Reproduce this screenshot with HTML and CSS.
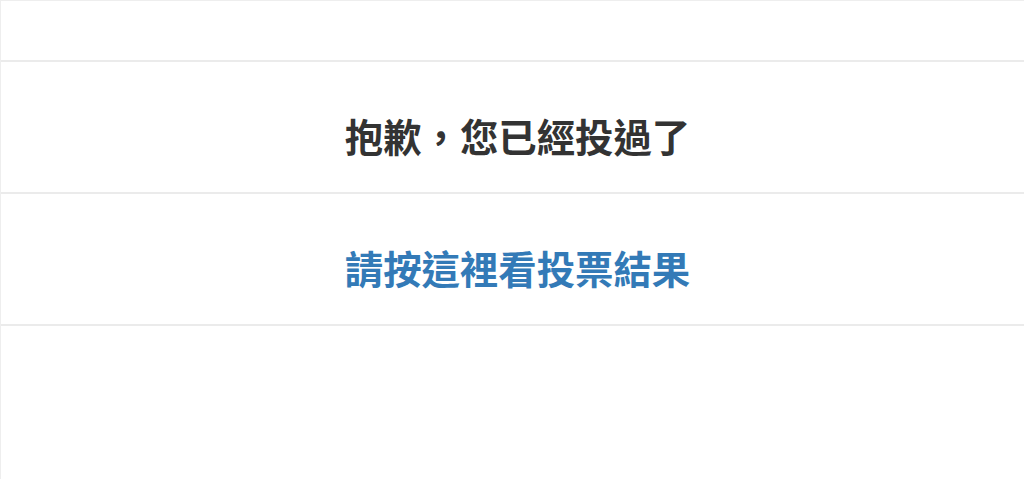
FILE: index.html
```html
<!DOCTYPE html>
<html lang="zh-Hant">
<head>
<meta charset="utf-8">
<title>投票</title>
<link rel="stylesheet" href="styles.css">
</head>
<body>
<div class="board">
  <div class="row row-top"></div>
  <div class="row row-msg"><span class="msg">抱歉，您已經投過了</span></div>
  <div class="row row-msg"><a class="link" href="#">請按這裡看投票結果</a></div>
  <div class="row-rest"></div>
</div>
</body>
</html>
```
FILE: styles.css
```css
html, body {
  margin: 0;
  padding: 0;
  background: #fff;
  font-family: "Noto Sans CJK TC", "Noto Sans", sans-serif;
}
.board {
  border-left: 1px solid #eee;
  border-top: 1px solid #eee;
  display: flex;
  flex-direction: column;
  min-height: 478px;
}
.row {
  box-sizing: border-box;
  border-bottom: 2px solid #ebebeb;
  display: flex;
  align-items: center;
  justify-content: center;
  padding-left: 10px;
}
.row-top {
  height: 61px;
}
.row-msg {
  height: 132px;
  padding-top: 17px;
}
.msg {
  font-size: 38.4px;
  font-weight: 700;
  color: #333;
  line-height: 1.2;
}
.link {
  font-size: 38.4px;
  font-weight: 700;
  color: #337ab7;
  text-decoration: none;
  line-height: 1.2;
}
.row-rest {
  flex: 1;
}
```
